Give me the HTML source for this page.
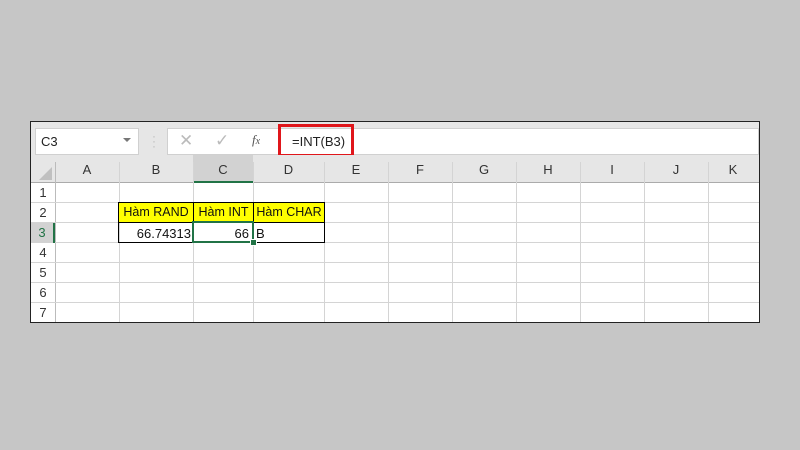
<!DOCTYPE html><html><head><style>
body{margin:0;width:800px;height:450px;background:#c6c6c6;position:relative;overflow:hidden;font-family:"Liberation Sans",sans-serif}
.a{position:absolute}
.win{left:30px;top:121px;width:728px;height:200px;border:1px solid #222;background:#fff;overflow:hidden}
.fb{left:0;top:0;width:728px;height:33px;background:#e6e6e6}
.hdr{left:0;top:33px;width:728px;height:27px;background:#e6e6e6;border-bottom:1px solid #ababab}
.t{font-size:13px;color:#222}
.vl{position:absolute;width:1px;background:#d4d4d4}
.hl{position:absolute;height:1px;background:#d4d4d4}
.ch{position:absolute;top:33px;height:27px;line-height:30px;text-align:center;font-size:13px;color:#333}
.rh{position:absolute;left:0;width:24px;height:20px;line-height:20px;text-align:center;font-size:13px;color:#333}
.y{position:absolute;background:#ffff00;font-size:12.5px;line-height:19px;color:#111}
</style></head><body>
<div class="a win">
<div class="a fb"></div>
<div class="a" style="left:4px;top:6px;width:102px;height:25px;background:#fff;border:1px solid #d0d0d0"></div>
<div class="a t" style="left:10px;top:12px">C3</div>
<div class="a" style="left:92px;top:16px;border-left:4px solid transparent;border-right:4px solid transparent;border-top:4px solid #777"></div>
<div class="a" style="left:121px;top:12px;color:#bbb;font-size:12px;line-height:5px">·<br>·<br>·</div>
<div class="a" style="left:136px;top:6px;width:590px;height:25px;background:#fff;border:1px solid #d0d0d0"></div>
<div class="a" style="left:148px;top:9px;color:#bbb;font-size:17px">✕</div>
<div class="a" style="left:184px;top:9px;color:#bbb;font-size:17px">✓</div>
<div class="a" style="left:221px;top:10px;color:#555;font-size:13px;font-style:italic;font-family:'Liberation Serif',serif">f<span style="font-size:10px">x</span></div>
<div class="a" style="left:247px;top:2px;width:70px;height:27px;border:3px solid #e0161b"></div>
<div class="a t" style="left:261px;top:12px">=INT(B3)</div>
<div class="a hdr"></div>
<div class="a" style="left:8px;top:45px;border-left:13px solid transparent;border-bottom:13px solid #c0c0c0"></div>
<div class="a" style="left:162px;top:33px;width:60px;height:26px;background:#d2d2d2;border-bottom:2px solid #217346"></div>
<div class="ch" style="left:24px;width:64px">A</div><div class="ch" style="left:88px;width:74px">B</div><div class="ch" style="left:162px;width:60px">C</div><div class="ch" style="left:222px;width:71px">D</div><div class="ch" style="left:293px;width:64px">E</div><div class="ch" style="left:357px;width:64px">F</div><div class="ch" style="left:421px;width:64px">G</div><div class="ch" style="left:485px;width:64px">H</div><div class="ch" style="left:549px;width:64px">I</div><div class="ch" style="left:613px;width:64px">J</div><div class="ch" style="left:677px;width:50px">K</div>
<div class="vl" style="left:24px;top:40px;height:160px;background:#bbb"></div>
<div class="vl" style="left:88px;top:40px;height:160px"></div><div class="vl" style="left:162px;top:40px;height:160px"></div><div class="vl" style="left:222px;top:40px;height:160px"></div><div class="vl" style="left:293px;top:40px;height:160px"></div><div class="vl" style="left:357px;top:40px;height:160px"></div><div class="vl" style="left:421px;top:40px;height:160px"></div><div class="vl" style="left:485px;top:40px;height:160px"></div><div class="vl" style="left:549px;top:40px;height:160px"></div><div class="vl" style="left:613px;top:40px;height:160px"></div><div class="vl" style="left:677px;top:40px;height:160px"></div>
<div class="hl" style="left:0;top:80px;width:728px"></div><div class="hl" style="left:0;top:100px;width:728px"></div><div class="hl" style="left:0;top:120px;width:728px"></div><div class="hl" style="left:0;top:140px;width:728px"></div><div class="hl" style="left:0;top:160px;width:728px"></div><div class="hl" style="left:0;top:180px;width:728px"></div>
<div class="rh" style="top:61px">1</div><div class="rh" style="top:81px">2</div><div class="rh" style="top:101px;color:#217346;background:#d2d2d2;border-right:2px solid #217346;width:22px">3</div><div class="rh" style="top:121px">4</div><div class="rh" style="top:141px">5</div><div class="rh" style="top:161px">6</div><div class="rh" style="top:181px">7</div>
<div class="y" style="left:88px;top:81px;width:74px;text-align:center">Hàm RAND</div>
<div class="y" style="left:163px;top:81px;width:59px;text-align:center">Hàm INT</div>
<div class="y" style="left:223px;top:81px;width:70px;text-align:center">Hàm CHAR</div>
<div class="a" style="left:87px;top:80px;width:205px;height:39px;border:1px solid #000"></div>
<div class="vl" style="left:162px;top:80px;height:40px;background:#000"></div><div class="vl" style="left:222px;top:80px;height:40px;background:#000"></div><div class="hl" style="left:87px;top:100px;width:206px;background:#000"></div>
<div class="a t" style="left:89px;top:104px;width:71px;text-align:right;color:#111">66.74313</div>
<div class="a" style="left:161px;top:99px;width:58px;height:18px;border:2px solid #217346"></div>
<div class="a t" style="left:163px;top:104px;width:55px;text-align:right;color:#111">66</div>
<div class="a" style="left:219px;top:117px;width:5px;height:5px;background:#217346;border:1px solid #fff"></div>
<div class="a t" style="left:225px;top:104px;color:#111">B</div>
</div>
</body></html>
